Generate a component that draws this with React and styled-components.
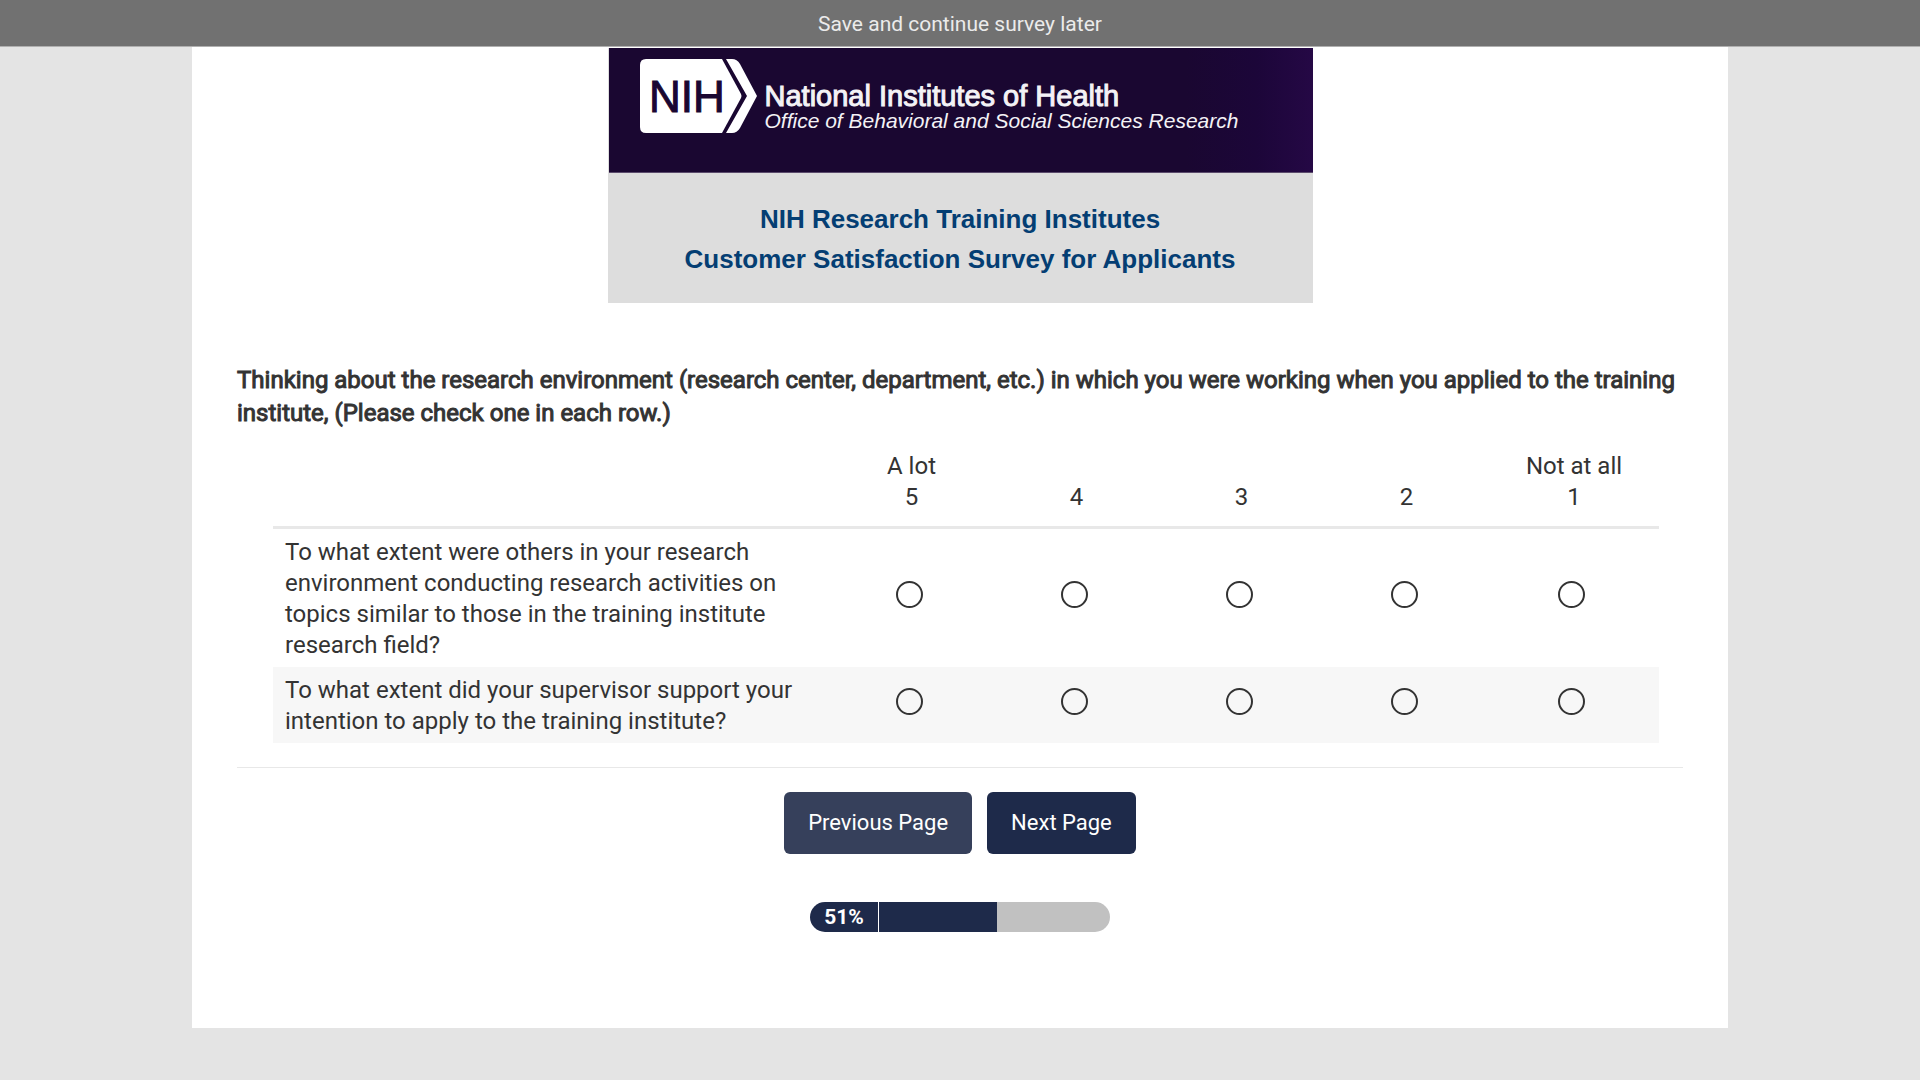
import React, { useState } from "react";
import styled, { createGlobalStyle } from "styled-components";

const columns = [
  { value: 5, caption: "A lot" },
  { value: 4 },
  { value: 3 },
  { value: 2 },
  { value: 1, caption: "Not at all" },
];

const questions = [
  {
    id: "others",
    text: "To what extent were others in your research environment conducting research activities on topics similar to those in the training institute research field?",
  },
  {
    id: "supervisor",
    text: "To what extent did your supervisor support your intention to apply to the training institute?",
  },
];

const NihLogo = () => (
  <StLogo viewBox="0 0 118 75" role="img" aria-label="NIH">
    <path
      d="M6 0H82L101 35Q102 37 101 39L82 74H6Q0 74 0 68V6Q0 0 6 0Z"
      fill="#fff"
    />
    <path
      d="M86 0H92Q97 0 100 5L117 37L100 69Q97 74 92 74H86L107 37Z"
      fill="#fff"
    />
    <text x="9" y="53">
      NIH
    </text>
  </StLogo>
);

const App = () => {
  const [answers, setAnswers] = useState({});
  const progress = 51;

  const onChangeAnswer = (id, value) => {
    setAnswers({ ...answers, [id]: value });
  };

  return (
    <>
      <GlobalStyle />
      <StSaveBar type="button">Save and continue survey later</StSaveBar>
      <StPage>
        <StHeader>
          <StBanner>
            <NihLogo />
            <StAgency>
              <StAgencyName>National Institutes of Health</StAgencyName>
              <StOffice>
                Office of Behavioral and Social Sciences Research
              </StOffice>
            </StAgency>
          </StBanner>
          <StSurveyTitle>
            NIH Research Training Institutes
            <br />
            Customer Satisfaction Survey for Applicants
          </StSurveyTitle>
        </StHeader>

        <StForm onSubmit={(e) => e.preventDefault()}>
          <StQuestion id="question">
            Thinking about the research environment (research center,
            department, etc.) in which you were working when you applied to the
            training institute, (Please check one in each row.)
          </StQuestion>

          <StTable aria-labelledby="question">
            <colgroup>
              <col />
              {columns.map(({ value }) => (
                <StCol key={value} $last={value === 1} />
              ))}
            </colgroup>
            <thead>
              <tr>
                <StHeadCell as="td" />
                {columns.map(({ value, caption }) => (
                  <StHeadCell key={value} scope="col">
                    {caption}
                    {caption && <br />}
                    {value}
                  </StHeadCell>
                ))}
              </tr>
            </thead>
            <tbody>
              {questions.map(({ id, text }) => (
                <StRow key={id}>
                  <StRowTitle scope="row">{text}</StRowTitle>
                  {columns.map(({ value, caption }) => (
                    <StAnswer key={value}>
                      <StRadio
                        type="radio"
                        name={id}
                        value={value}
                        aria-label={caption ? `${caption} ${value}` : `${value}`}
                        checked={answers[id] === value}
                        onChange={() => onChangeAnswer(id, value)}
                      />
                    </StAnswer>
                  ))}
                </StRow>
              ))}
            </tbody>
          </StTable>

          <StButtons>
            <StButton type="button" $color="#36405b">
              Previous Page
            </StButton>
            <StButton type="submit" $color="#1e2a4a">
              Next Page
            </StButton>
          </StButtons>
        </StForm>

        <StProgress
          role="progressbar"
          aria-label="Survey progress"
          aria-valuenow={progress}
        >
          <StPercent>{progress}%</StPercent>
          <StTrack>
            <StFill style={{ width: `${progress}%` }} />
          </StTrack>
        </StProgress>
      </StPage>
    </>
  );
};

export default App;

const GlobalStyle = createGlobalStyle`
  * {
    box-sizing: border-box;
  }

  body {
    margin: 0;
    background-color: #e4e4e4;
    color: #333;
    font-family: Roboto, "Liberation Sans", sans-serif;
    font-size: 24px;
    line-height: 31px;
  }
`;

const StSaveBar = styled.button`
  display: block;
  width: 100%;
  height: 47px;
  padding: 2px 0 0;
  border: 0;
  border-bottom: 1px solid #b0b0b0;
  background-color: #717171;
  color: #ebebeb;
  font-family: inherit;
  font-size: 21px;
  cursor: pointer;
`;

const StPage = styled.main`
  width: 80%;
  margin: 0 auto 52px;
  padding: 1px 45px 96px;
  background-color: #fff;
`;

const StHeader = styled.header`
  max-width: 705px;
  margin: 0 auto;
  background-color: #ddd;
  font-family: "Liberation Sans", Arial, sans-serif;
`;

const StBanner = styled.div`
  display: flex;
  gap: 7px;
  height: 125px;
  margin-left: 1px;
  padding: 11px 0 0 31px;
  background: linear-gradient(90deg, #1a0731 82%, #1c0639 92%, #250845);
  border-bottom: 1px solid #5b4b6c;
`;

const StLogo = styled.svg`
  width: 118px;
  height: 75px;
  flex: none;

  text {
    fill: #1a0731;
    stroke: #1a0731;
    stroke-width: 1px;
    font-size: 44px;
  }
`;

const StAgency = styled.div`
  padding-top: 21px;
  color: #f4f2f6;
  white-space: nowrap;
`;

const StAgencyName = styled.div`
  font-size: 29px;
  line-height: 32px;
  -webkit-text-stroke: 1px;
`;

const StOffice = styled.div`
  font-size: 21px;
  font-style: italic;
  line-height: 18px;
`;

const StSurveyTitle = styled.h1`
  margin: 0;
  padding: 26px 0 24px;
  color: #043e73;
  font-size: 26px;
  line-height: 40px;
  text-align: center;
`;

const StForm = styled.form`
  padding-top: 61px;
`;

const StQuestion = styled.h2`
  margin: 0;
  font-size: 24px;
  font-weight: 400;
  line-height: 33px;
  -webkit-text-stroke: 1px;
`;

const StTable = styled.table`
  width: calc(100% - 60px);
  margin: 15px 24px 24px 36px;
  border-collapse: collapse;
  table-layout: fixed;
`;

const StCol = styled.col`
  width: ${({ $last }) => ($last ? "170px" : "165px")};
`;

const StHeadCell = styled.th`
  padding: 6px 0 13px;
  border-bottom: 3px solid #e8e8e8;
  font-weight: 400;
  text-align: center;
  vertical-align: bottom;
`;

const StRow = styled.tr`
  &:nth-child(even) {
    background-color: #f7f7f7;
  }
`;

const StRowTitle = styled.th`
  padding: 8px 12px 6px;
  font-weight: 400;
  text-align: left;
`;

const StAnswer = styled.td`
  padding: 0;
  text-align: center;
`;

const StRadio = styled.input`
  appearance: none;
  width: 27px;
  height: 27px;
  margin: 0 5px 7px 0;
  border: 2px solid #333;
  border-radius: 50%;
  vertical-align: middle;
  cursor: pointer;

  &:checked {
    background: radial-gradient(#333 45%, transparent 50%);
  }
`;

const StButtons = styled.div`
  display: flex;
  justify-content: center;
  gap: 15px;
  padding-top: 24px;
  border-top: 1px solid #e8e8e8;
`;

const StButton = styled.button`
  height: 62px;
  padding: 0 24px 2px;
  border: 0;
  border-radius: 6px;
  background-color: ${({ $color }) => $color};
  color: #fff;
  font-family: inherit;
  font-size: 22px;
  cursor: pointer;
`;

const StProgress = styled.div`
  display: flex;
  width: 300px;
  height: 30px;
  margin: 48px auto 0;
  border-radius: 15px;
  overflow: hidden;
`;

const StPercent = styled.div`
  width: 69px;
  border-right: 1px solid #fff;
  background-color: #1e2a4a;
  color: #fff;
  font-size: 21px;
  font-weight: 700;
  line-height: 30px;
  text-align: center;
`;

const StTrack = styled.div`
  flex: 1;
  background-color: #c1c1c1;
`;

const StFill = styled.div`
  height: 100%;
  background-color: #1e2a4a;
`;
